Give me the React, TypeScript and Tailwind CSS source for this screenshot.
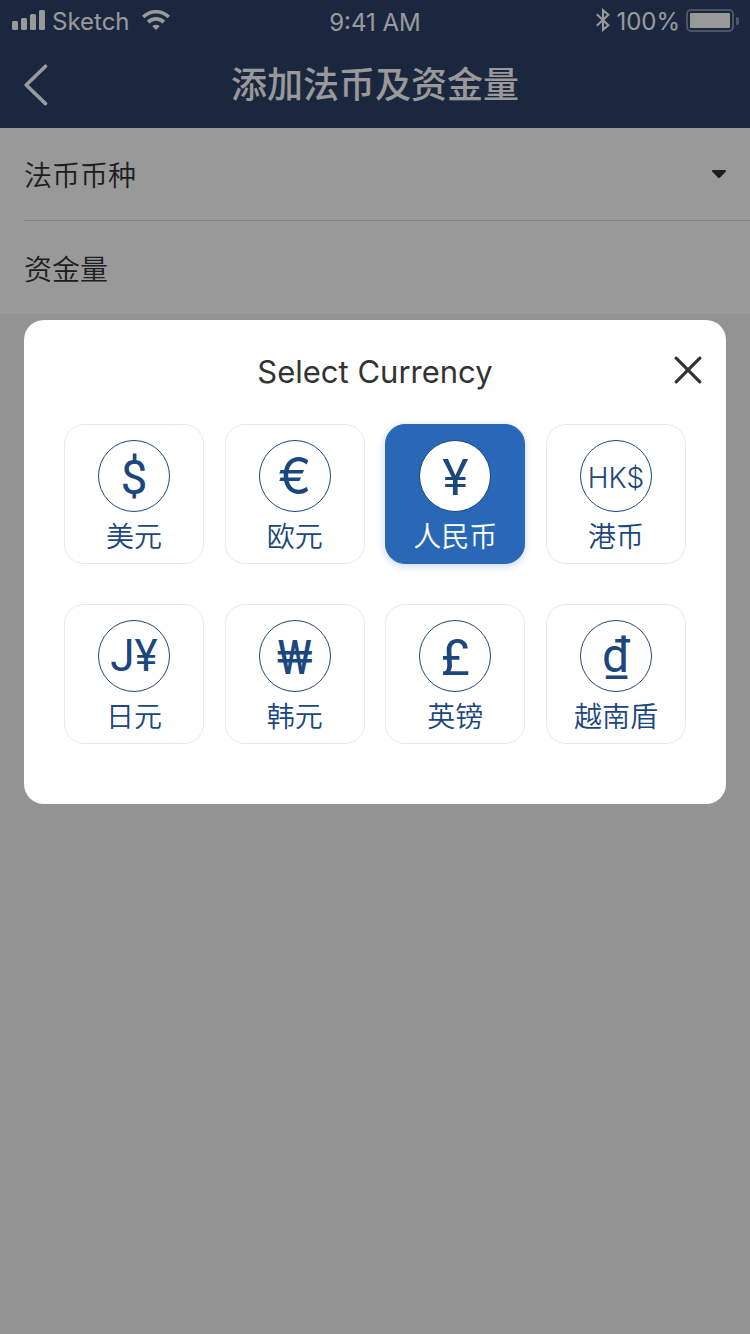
import { useState } from 'react';

type Currency = { id: string; symbol: string; name: string; symbolClass: string };

const currencies: Currency[] = [
  { id: 'usd', symbol: '$', name: '美元', symbolClass: "pt-1 font-['Roboto',sans-serif] text-[48px]" },
  { id: 'eur', symbol: '€', name: '欧元', symbolClass: "font-['Inter',sans-serif] text-[50px]" },
  { id: 'cny', symbol: '¥', name: '人民币', symbolClass: "pt-1 font-['Roboto',sans-serif] text-[50px]" },
  { id: 'hkd', symbol: 'HK$', name: '港币', symbolClass: "pt-1 font-['Inter',sans-serif] text-[28px] font-light" },
  { id: 'jpy', symbol: 'J¥', name: '日元', symbolClass: "font-['Roboto',sans-serif] text-[44px]" },
  { id: 'krw', symbol: '₩', name: '韩元', symbolClass: "pt-1 font-['Roboto',sans-serif] text-[48px]" },
  { id: 'gbp', symbol: '£', name: '英镑', symbolClass: "pt-1 font-['Roboto',sans-serif] text-[50px]" },
  { id: 'vnd', symbol: '₫', name: '越南盾', symbolClass: "font-['Roboto',sans-serif] text-[48px]" },
];

function SignalIcon() {
  return (
    <svg width="34" height="20" viewBox="0 0 34 20" fill="currentColor" aria-hidden="true">
      <rect x="0" y="11" width="6" height="9" rx="1.5" />
      <rect x="9" y="8" width="6" height="12" rx="1.5" />
      <rect x="18" y="4" width="6" height="16" rx="1.5" />
      <rect x="27" y="0" width="6" height="20" rx="1.5" />
    </svg>
  );
}

function WifiIcon() {
  return (
    <svg width="28" height="20" viewBox="0 0 28 20" fill="none" stroke="currentColor" strokeWidth="3.6" aria-hidden="true">
      <path d="M1.2 7a18.2 18.2 0 0 1 25.6 0" />
      <path d="M6.2 12.1a11.1 11.1 0 0 1 15.6 0" />
      <path d="M14 20l-3.7-3.7a5.4 5.4 0 0 1 7.4 0z" fill="currentColor" stroke="none" />
    </svg>
  );
}

function BluetoothIcon() {
  return (
    <svg width="14" height="24" viewBox="0 0 14 24" fill="none" stroke="currentColor" strokeWidth="2.1" aria-hidden="true">
      <path d="M0.8 6.2L12.4 17.2L7 21.8V2.2l5.4 4.6L0.8 17.8" />
    </svg>
  );
}

function BatteryIcon() {
  return (
    <svg width="53" height="23" viewBox="0 0 53 23" aria-hidden="true">
      <rect x="1" y="1" width="46" height="21" rx="4" fill="none" stroke="currentColor" strokeWidth="2" opacity="0.4" />
      <rect x="4" y="4" width="40" height="15" rx="1" fill="currentColor" />
      <path d="M50 8a4 4 0 0 1 0 8z" fill="currentColor" opacity="0.4" />
    </svg>
  );
}

function StatusBar() {
  return (
    <div className="grid h-10 grid-cols-[1fr_auto_1fr] items-center font-['Inter',sans-serif] text-[24px] leading-8">
      <div className="flex items-center gap-1.5 pl-3">
        <SignalIcon />
        <span className="pt-1">Sketch</span>
        <span className="pl-1.5">
          <WifiIcon />
        </span>
      </div>
      <span className="pt-1.5">9:41 AM</span>
      <div className="flex items-center justify-end gap-1.5 pr-[11px]">
        <BluetoothIcon />
        <span className="pt-1">100%</span>
        <BatteryIcon />
      </div>
    </div>
  );
}

function CurrencyCard({ item, selected, onSelect }: { item: Currency; selected: boolean; onSelect: () => void }) {
  return (
    <button
      type="button"
      aria-pressed={selected}
      onClick={onSelect}
      className={
        selected
          ? 'flex h-[140px] flex-col items-center gap-[3px] rounded-[20px] border border-[#2967b7] bg-[#2967b7] pt-[15px] text-white shadow-[0_2px_8px_rgba(41,103,183,0.25)]'
          : 'flex h-[140px] flex-col items-center gap-[3px] rounded-[20px] border border-[#e3e8f7] bg-white pt-[15px] text-[#1b477e]'
      }
    >
      <span className="flex size-[72px] shrink-0 items-center justify-center rounded-full border border-[#1b477e] bg-white leading-[64px] text-[#1b477e]">
        <span className={item.symbolClass}>{item.symbol}</span>
      </span>
      <span className="text-[28px] leading-10 font-[350]">{item.name}</span>
    </button>
  );
}

export default function App() {
  const [selected, setSelected] = useState('cny');
  const [open, setOpen] = useState(true);

  return (
    <div className="min-h-screen bg-[#f5f5f5] font-['Noto_Sans_CJK_SC',sans-serif] text-[#333]">
      <header className="bg-[#2e406a] text-white">
        <StatusBar />
        <div className="grid h-[88px] grid-cols-[72px_1fr_72px] items-center">
          <button type="button" aria-label="返回" className="pt-0.5 pl-6">
            <svg width="24" height="42" viewBox="0 0 24 42" fill="none" stroke="currentColor" strokeWidth="3.6" strokeLinecap="round" strokeLinejoin="round">
              <path d="M21.5 2.2L2.2 21L21.5 39.6" />
            </svg>
          </button>
          <h1 className="pb-1 text-center text-[36px] leading-[52px] font-medium">添加法币及资金量</h1>
        </div>
      </header>

      <main className="bg-white pl-6 text-[28px] font-[350]">
        <div className="flex h-[93px] items-center border-b border-[#dcdcdc] pr-6">
          <label htmlFor="currency">法币币种</label>
          <select
            id="currency"
            value=""
            onChange={() => undefined}
            onMouseDown={() => setOpen(true)}
            className="h-full flex-1 appearance-none bg-transparent outline-none"
          >
            <option value=""></option>
          </select>
          <svg width="14" height="8" viewBox="0 0 14 8" fill="currentColor" aria-hidden="true">
            <path d="M1 0h12a1 1 0 0 1 .7 1.7L8 7.4a1.4 1.4 0 0 1-2 0L.3 1.7A1 1 0 0 1 1 0z" />
          </svg>
        </div>
        <div className="flex h-[93px] items-center pr-6">
          <label htmlFor="amount">资金量</label>
          <input id="amount" type="text" inputMode="decimal" className="h-full min-w-0 flex-1 bg-transparent outline-none" />
        </div>
      </main>

      {open && (
        <div className="fixed inset-0 bg-black/40 px-6 pt-80">
          <section role="dialog" aria-modal="true" aria-labelledby="dialog-title" className="rounded-[20px] bg-white px-10 pb-[60px]">
            <div className="-mx-4 grid h-[104px] grid-cols-[28px_1fr_28px] items-center">
              <h2 id="dialog-title" className="col-start-2 text-center font-['Inter',sans-serif] text-[31px]">
                Select Currency
              </h2>
              <button type="button" aria-label="关闭" className="pb-1" onClick={() => setOpen(false)}>
                <svg width="28" height="28" viewBox="0 0 28 28" fill="none" stroke="currentColor" strokeWidth="3.2" strokeLinecap="round">
                  <path d="M2.2 2.2L25.8 25.8M25.8 2.2L2.2 25.8" />
                </svg>
              </button>
            </div>
            <div className="grid grid-cols-[repeat(4,minmax(0,140px))] justify-between gap-y-10">
              {currencies.map((item) => (
                <CurrencyCard key={item.id} item={item} selected={item.id === selected} onSelect={() => setSelected(item.id)} />
              ))}
            </div>
          </section>
        </div>
      )}
    </div>
  );
}
